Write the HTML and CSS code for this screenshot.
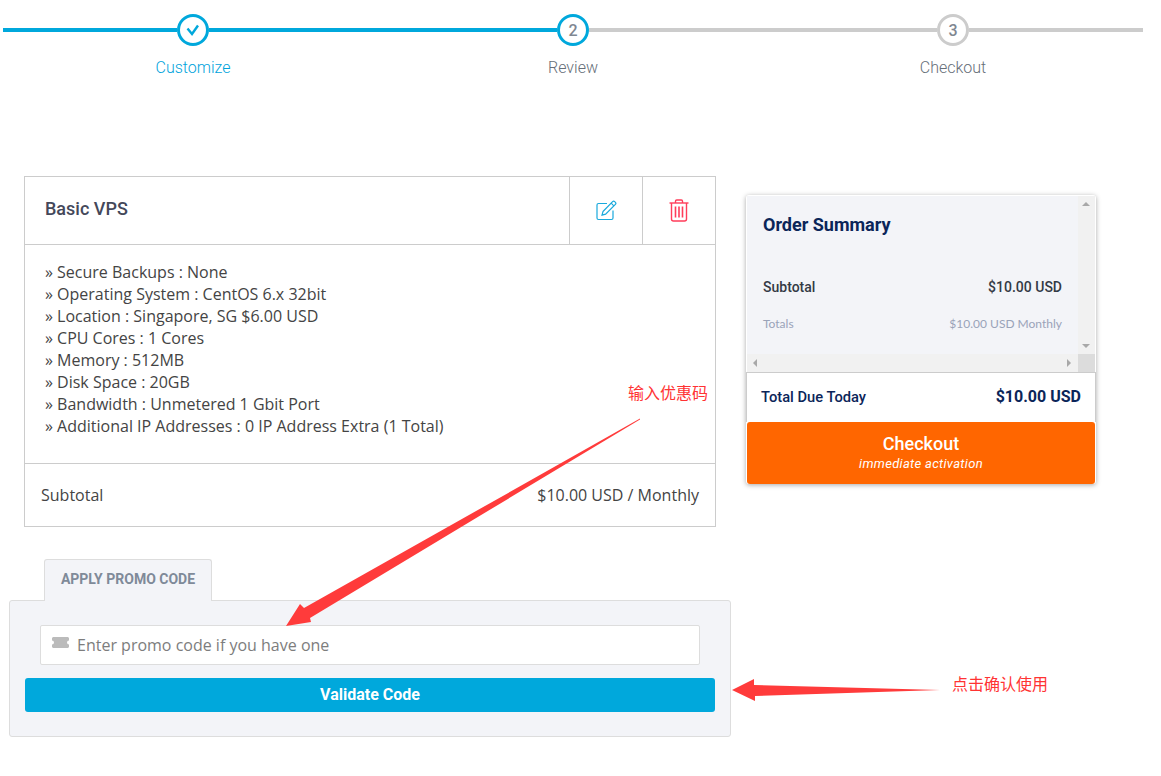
FILE: index.html
```html
<!DOCTYPE html>
<html lang="en">
<head>
<meta charset="utf-8">
<title>Review &amp; Checkout</title>
<link rel="stylesheet" href="styles.css">
</head>
<body>
<div class="page">
  <div class="stepper">
    <div class="step step-active">
      <div class="track"><span class="line on"></span><span class="dot on"><svg class="check" viewBox="0 0 14 12"><path d="M1.500 4.500 L6 10 L12 1.500"/></svg></span><span class="line on"></span></div>
      <div class="step-label">Customize</div>
    </div>
    <div class="step">
      <div class="track"><span class="line on"></span><span class="dot on">2</span><span class="line"></span></div>
      <div class="step-label">Review</div>
    </div>
    <div class="step">
      <div class="track"><span class="line"></span><span class="dot">3</span><span class="line"></span></div>
      <div class="step-label">Checkout</div>
    </div>
  </div>

  <div class="columns">
    <div class="left">
      <section class="card">
        <header class="card-head">
          <h2 class="card-title">Basic VPS</h2>
          <a class="icon-cell">
            <svg class="icon-edit" viewBox="0 0 21 21"><path d="M11 3.500H2.500a1.500 1.500 0 0 0-1.500 1.500v13a1.500 1.500 0 0 0 1.500 1.500h13a1.500 1.500 0 0 0 1.500-1.500V10.500"/><path d="M7 11.500 16.600 1.600a1.500 1.500 0 0 1 2.100 0l.7.7a1.500 1.500 0 0 1 0 2.100L9.600 14.200 6 15.200Z"/><path d="M15.200 3.200l2.600 2.600"/></svg>
          </a>
          <a class="icon-cell">
            <svg class="icon-trash" viewBox="0 0 20 23"><path d="M.5 4h19"/><path d="M6.500 4V2.200A1.200 1.200 0 0 1 7.700 1h4.600a1.200 1.200 0 0 1 1.200 1.200V4"/><path d="M2.500 4v16a2 2 0 0 0 2 2h11a2 2 0 0 0 2-2V4"/><path d="M6.500 7.500v11M10 7.500v11M13.500 7.500v11" class="bars"/></svg>
          </a>
        </header>
        <div class="card-body">
          <div>» Secure Backups : None</div>
          <div>» Operating System : CentOS 6.x 32bit</div>
          <div>» Location : Singapore, SG $6.00 USD</div>
          <div>» CPU Cores : 1 Cores</div>
          <div>» Memory : 512MB</div>
          <div>» Disk Space : 20GB</div>
          <div>» Bandwidth : Unmetered 1 Gbit Port</div>
          <div>» Additional IP Addresses : 0 IP Address Extra (1 Total)</div>
        </div>
        <footer class="card-foot">
          <span>Subtotal</span>
          <span>$10.00 USD / Monthly</span>
        </footer>
      </section>

      <div class="promo">
        <div class="promo-tab">APPLY PROMO CODE</div>
        <div class="promo-panel">
          <label class="promo-field">
            <svg class="ticket" viewBox="0 0 17 11"><path d="M1 0h15l1 1v2.500a2 2 0 0 0 0 4V10l-1 1H1l-1-1V7.500a2 2 0 0 0 0-4V1Z"/></svg>
            <input class="promo-input" type="text" placeholder="Enter promo code if you have one">
          </label>
          <button class="validate" type="button">Validate Code</button>
        </div>
      </div>
    </div>

    <aside class="summary">
      <div class="summary-scroll">
        <div class="summary-content">
          <h2 class="summary-title">Order Summary</h2>
          <div class="row row-sub"><span>Subtotal</span><span>$10.00 USD</span></div>
          <div class="row row-tot"><span>Totals</span><span>$10.00 USD Monthly</span></div>
        </div>
        <div class="vbar"><i class="arr arr-up"></i><i class="arr arr-down"></i></div>
        <div class="hbar"><i class="arr arr-left"></i><i class="arr arr-right"></i></div>
        <div class="corner"></div>
      </div>
      <div class="due">
        <span class="due-label">Total Due Today</span>
        <span class="due-amount">$10.00 USD</span>
      </div>
      <button class="checkout" type="button">
        <span class="checkout-main">Checkout</span>
        <span class="checkout-sub">immediate activation</span>
      </button>
    </aside>
  </div>

  <svg class="arrows" viewBox="0 0 1161 776">
    <polygon points="640,418.600 304,608 300,604 286,626 311,622 310,618 640,419.400"/>
    <polygon points="940,690 754,685 754,679 732,690 755,701 755,696"/>
  </svg>
  <div class="note note-a" lang="zh-CN">输入优惠码</div>
  <div class="note note-b" lang="zh-CN">点击确认使用</div>
</div>
</body>
</html>
```

FILE: styles.css
```css
* { box-sizing: border-box; }
html, body { margin: 0; padding: 0; background: #fff; }
body { font-family: "Open Sans", sans-serif; font-size: 16px; color: #444; }
.page { position: relative; width: 1161px; height: 776px; overflow: hidden; }

/* stepper */
.stepper { display: flex; width: 1140px; margin-left: 3px; padding-top: 14px; }
.step { flex: 1; display: flex; flex-direction: column; align-items: center; }
.track { display: flex; align-items: center; width: 100%; }
.line { flex: 1; height: 4px; background: #ccc; }
.line.on { background: #00a8dc; }
.dot {
  width: 32px; height: 32px; border-radius: 50%;
  border: 3px solid #ccc; background: #fff;
  display: flex; align-items: center; justify-content: center;
  font-family: Roboto, sans-serif; font-weight: 500; font-size: 16px; color: #7f8791;
}
.dot.on { border-color: #00a8dc; }
.check { width: 14px; height: 12px; fill: none; stroke: #00a8dc; stroke-width: 2.4; }
.step-label { margin-top: 10px; font-family: Roboto, sans-serif; font-weight: 300; font-size: 16px; line-height: 24px; color: #666e78; }
.step-active .step-label { color: #00a3dc; }

/* columns */
.columns { display: flex; align-items: flex-start; gap: 15px; margin-top: 96px; margin-left: 9px; }
.left { width: 722px; }

/* product card */
.card { margin: 0 15px; border: 1px solid #ccc; }
.card-head { display: flex; height: 68px; border-bottom: 1px solid #ccc; }
.card-title { flex: 1; margin: 0; padding-left: 20px; font-family: Roboto, sans-serif; font-weight: 500; font-size: 18px; line-height: 63px; color: #44485a; }
.icon-cell { width: 73px; display: flex; align-items: center; justify-content: center; border-left: 1px solid #ccc; }
.icon-edit { width: 21px; height: 21px; fill: none; stroke: #19a9dc; stroke-width: 1.2; }
.icon-trash { width: 20px; height: 23px; fill: none; stroke: #ff3d5a; stroke-width: 1.4; }
.icon-trash .bars { stroke-width: 1.6; }
.card-body { padding: 16px 20px 26px; line-height: 22px; border-bottom: 1px solid #ccc; color: #444; }
.card-foot { display: flex; justify-content: space-between; align-items: center; height: 62px; padding: 0 16px; color: #444; }

/* promo */
.promo { margin-top: 32px; }
.promo-tab {
  width: 168px; height: 42px; margin-left: 35px; margin-bottom: -1px; position: relative;
  background: #f3f4f8; border: 1px solid #ddd; border-bottom: 0; border-radius: 3px 3px 0 0;
  font-family: Roboto, sans-serif; font-weight: 700; font-size: 14px; line-height: 38px; text-align: center; color: #7f8a99;
}
.promo-panel { background: #f3f4f8; border: 1px solid #ddd; border-radius: 3px; padding: 24px 15px; }
.promo-field { display: flex; align-items: center; height: 40px; margin: 0 15px; padding-left: 11px; gap: 8px; background: #fff; border: 1px solid #ddd; border-radius: 2px; }
.ticket { width: 17px; height: 11px; fill: #bbb; margin-top: -6px; flex: none; }
.promo-input { flex: 1; min-width: 0; border: 0; outline: 0; padding: 0; background: transparent; font-family: "Open Sans", sans-serif; font-size: 16px; color: #555; }
.promo-input::placeholder { color: #7d7d7d; opacity: 1; }
.validate { display: block; width: 100%; height: 34px; margin-top: 13px; padding: 0 0 2px; border: 0; border-radius: 3px; background: #00a8dc; color: #fff; font-family: Roboto, sans-serif; font-weight: 700; font-size: 16px; }

/* summary */
.summary { width: 350px; margin-top: 19px; border-radius: 3px; background: #fff; box-shadow: 0 1px 5px rgba(0,0,0,.35); padding: 1px 1px 0; }
.summary-scroll { display: grid; grid-template-columns: 1fr 17px; grid-template-rows: 158px 18px; }
.summary-content { background: #f3f4f8; padding: 17px 16px 0 16px; }
.summary-title { margin: 0 0 40px; font-family: Roboto, sans-serif; font-weight: 700; font-size: 18px; line-height: 24px; color: #0b2559; }
.row { display: flex; justify-content: space-between; }
.row-sub { font-family: Roboto, sans-serif; font-weight: 500; font-size: 14px; line-height: 20px; color: #333a45; margin-bottom: 17px; }
.row-tot { font-family: Lato, sans-serif; font-size: 12px; line-height: 20px; color: #9aa3b8; }
.vbar, .hbar { position: relative; background: #f1f1f1; }
.corner { background: #dcdcdc; }
.arr { position: absolute; width: 0; height: 0; border-style: solid; border-color: transparent; }
.arr-up { left: 4px; top: 6px; border-width: 0 4px 4px; border-bottom-color: #a8a8a8; }
.arr-down { left: 4px; bottom: 6px; border-width: 4px 4px 0; border-top-color: #a8a8a8; }
.arr-left { left: 6px; top: 5px; border-width: 4px 4px 4px 0; border-right-color: #a8a8a8; }
.arr-right { right: 7px; top: 5px; border-width: 4px 0 4px 4px; border-left-color: #a8a8a8; }
.due { display: flex; justify-content: space-between; align-items: center; height: 50px; margin: 0 -1px; padding: 0 14px 2px; background: #fff; border: 1px solid #ccc; border-bottom: 0; }
.due-label { font-family: Roboto, sans-serif; font-weight: 500; font-size: 14.700px; color: #0b2559; }
.due-amount { font-family: Roboto, sans-serif; font-weight: 700; font-size: 16px; color: #0b2559; }
.checkout { display: flex; flex-direction: column; align-items: center; justify-content: center; width: 100%; height: 62px; padding: 0 0 2px; border: 0; border-radius: 3px; background: #ff6600; color: #fff; font-family: Roboto, sans-serif; }
.checkout-main { font-weight: 500; font-size: 18px; line-height: 24px; }
.checkout-sub { font-style: italic; font-size: 13px; line-height: 16px; letter-spacing: .3px; }

/* annotations drawn over the screenshot */
.arrows { position: absolute; left: 0; top: 0; width: 1161px; height: 776px; pointer-events: none; }
.arrows polygon { fill: #ff3b3b; }
.note { position: absolute; font-family: "Noto Sans CJK SC", sans-serif; font-size: 16px; line-height: 20px; color: #ff3333; white-space: nowrap; }
.note-a { left: 628px; top: 382px; }
.note-b { left: 952px; top: 673px; }
```
